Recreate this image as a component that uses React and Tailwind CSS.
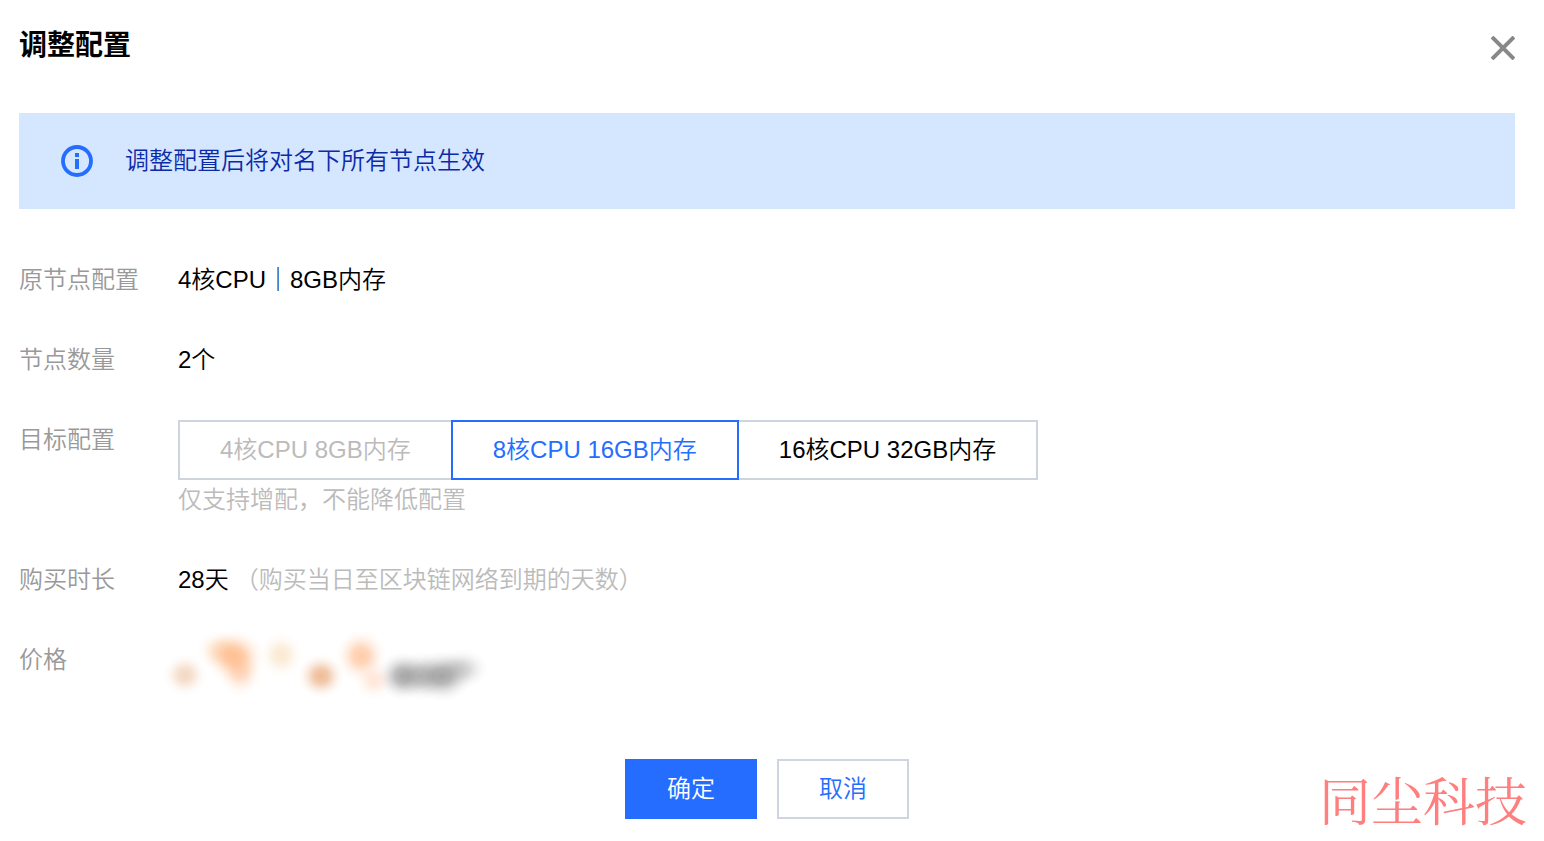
// src/components/AdjustConfigDialog.jsx
import React, { useState } from "react";

const OPTIONS = [
  { id: "4c8g", label: "4核CPU 8GB内存", disabled: true },
  { id: "8c16g", label: "8核CPU 16GB内存" },
  { id: "16c32g", label: "16核CPU 32GB内存" },
];

// cx, cy, rx, ry, color, opacity
const BLOBS = [
  [35, 53, 22, 21, "#eec3a3", 0.65],
  [70, 28, 24, 20, "#fbd0a8", 0.55],
  [84, 34, 30, 26, "#ffb27a", 0.8],
  [90, 50, 22, 24, "#ffb88a", 0.55],
  [131, 33, 22, 23, "#f9ddb8", 0.65],
  [171, 54, 23, 22, "#ecb084", 0.85],
  [211, 34, 25, 26, "#ffba8c", 0.75],
  [224, 58, 20, 20, "#ffcfb3", 0.5],
  [252, 54, 24, 24, "#6e6e6e", 0.55],
  [270, 54, 26, 24, "#6e6e6e", 0.45],
  [292, 54, 30, 25, "#6e6e6e", 0.6],
  [312, 47, 26, 20, "#808080", 0.35],
];

const Row = ({ label, children }) => (
  <div className="flex items-start">
    <dt className="w-[159px] shrink-0 text-[#999999]">{label}</dt>
    <dd className="min-w-0 flex-1">{children}</dd>
  </div>
);

const InfoIcon = () => (
  <svg className="size-8 shrink-0" viewBox="0 0 32 32" fill="none" aria-hidden="true">
    <circle cx="16" cy="16" r="14" stroke="#246dff" strokeWidth="3.8" />
    <path d="M14 8h4v4h-4zM14 14h4v10h-4z" fill="#246dff" />
  </svg>
);

// Price is masked, only soft blobs of color are visible
const MaskedPrice = () => (
  <svg className="h-[90px] w-[350px] -ml-7 -mt-[18px] -mb-8" viewBox="0 0 350 90" aria-hidden="true">
    <defs>
      {BLOBS.map(([, , , , color, opacity], i) => (
        <radialGradient key={i} id={`blob-${i}`}>
          <stop offset="0" stopColor={color} stopOpacity={opacity} />
          <stop offset="0.3" stopColor={color} stopOpacity={opacity * 0.8} />
          <stop offset="0.6" stopColor={color} stopOpacity={opacity * 0.32} />
          <stop offset="0.8" stopColor={color} stopOpacity={opacity * 0.1} />
          <stop offset="1" stopColor={color} stopOpacity="0" />
        </radialGradient>
      ))}
    </defs>
    {BLOBS.map(([cx, cy, rx, ry], i) => (
      <ellipse key={i} cx={cx} cy={cy} rx={rx} ry={ry} fill={`url(#blob-${i})`} />
    ))}
  </svg>
);

const App = () => {
  const [selected, setSelected] = useState("8c16g");

  return (
    <main
      className="relative min-h-screen bg-white pl-[19px] pr-[29px] pt-[26px] pb-[22px] text-[24px] leading-10 font-[350] text-black font-['Liberation_Sans','Noto_Sans_CJK_SC',sans-serif]"
      lang="zh-CN"
    >
      <header className="flex items-start justify-between">
        <h1 className="text-[28px] font-bold">调整配置</h1>
        <button type="button" aria-label="关闭" className="mt-[10px] cursor-pointer">
          <svg className="size-6" viewBox="0 0 24 24" fill="none" aria-hidden="true">
            <path d="M1 1l22 22M23 1L1 23" stroke="#888888" strokeWidth="4" />
          </svg>
        </button>
      </header>

      <div className="mt-[47px] flex items-center gap-8 bg-[#d5e6ff] px-[42px] py-7 text-[#0b2aa8]">
        <InfoIcon />
        <p>调整配置后将对名下所有节点生效</p>
      </div>

      <dl className="mt-[51px] flex flex-col gap-10">
        <Row label="原节点配置">4核CPU｜8GB内存</Row>
        <Row label="节点数量">2个</Row>
        <Row label="目标配置">
          <div className="flex">
            {OPTIONS.map((opt) => (
              <button
                key={opt.id}
                type="button"
                disabled={opt.disabled}
                aria-pressed={selected === opt.id}
                onClick={() => setSelected(opt.id)}
                className="-ml-0.5 h-15 border-2 border-[#cfd5de] px-10 first:ml-0 disabled:text-[#bbbbbb] aria-pressed:z-10 aria-pressed:border-[#246dff] aria-pressed:text-[#246dff]"
              >
                {opt.label}
              </button>
            ))}
          </div>
          <p className="text-[#bbbbbb]">仅支持增配，不能降低配置</p>
        </Row>
        <Row label="购买时长">
          28天<span className="ml-1.5 text-[#bbbbbb]">（购买当日至区块链网络到期的天数）</span>
        </Row>
        <Row label="价格">
          <MaskedPrice />
        </Row>
      </dl>

      <footer className="mt-[79px] flex justify-center gap-5">
        <button type="button" className="h-15 w-[132px] bg-[#246dff] text-white">
          确定
        </button>
        <button type="button" className="h-15 w-[132px] border-2 border-[#cfd5de] text-[#246dff]">
          取消
        </button>
      </footer>

      <div className="absolute right-[17px] bottom-3 text-[52px] leading-15 font-normal text-[#ff7f7f] font-['Noto_Serif_CJK_SC','Noto_Sans_CJK_SC',serif]">
        同尘科技
      </div>
    </main>
  );
};

export default App;
